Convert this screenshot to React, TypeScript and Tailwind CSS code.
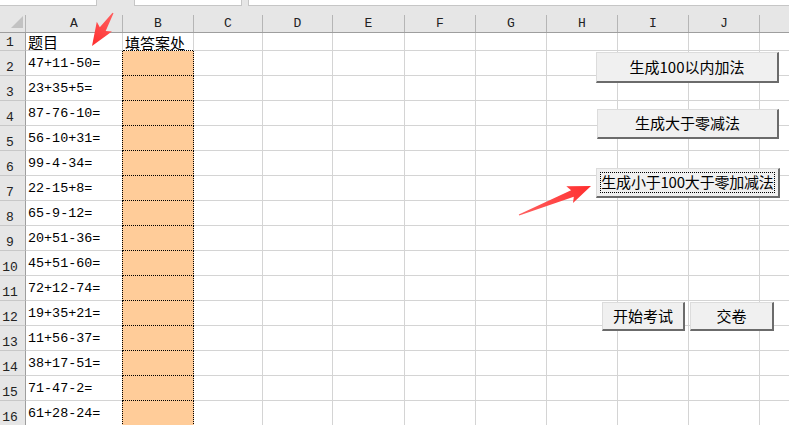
import React from 'react';

const cols = [
  { k: 'A', w: 'w-[97px]' },
  { k: 'B', w: 'w-[71px]' },
  { k: 'C', w: 'w-[69px]' },
  { k: 'D', w: 'w-[70px]' },
  { k: 'E', w: 'w-[72px]' },
  { k: 'F', w: 'w-[71px]' },
  { k: 'G', w: 'w-[71px]' },
  { k: 'H', w: 'w-[71px]' },
  { k: 'I', w: 'w-[71px]' },
  { k: 'J', w: 'w-[71px]' },
];

const problems = [
  '47+11-50=', '23+35+5=', '87-76-10=', '56-10+31=', '99-4-34=',
  '22-15+8=', '65-9-12=', '20+51-36=', '45+51-60=', '72+12-74=',
  '19+35+21=', '11+56-37=', '38+17-51=', '71-47-2=', '61+28-24=',
];

const mono = { fontFamily: '"Liberation Mono", "Noto Sans CJK SC", monospace' };
const cjk = { fontFamily: '"Noto Sans CJK SC", "Liberation Sans", sans-serif' };

// arrow polygon from tail to tip, thin at tail and wide at head
function arrowPoints(tx: number, ty: number, hx: number, hy: number, headLen = 20, headW = 9) {
  const dx = hx - tx;
  const dy = hy - ty;
  const len = Math.hypot(dx, dy);
  const ux = dx / len;
  const uy = dy / len;
  const nx = -uy;
  const ny = ux;
  const bx = hx - ux * headLen;
  const by = hy - uy * headLen;
  const wx = hx - ux * (headLen + 3);
  const wy = hy - uy * (headLen + 3);
  const pts = [
    [tx + nx * 0.6, ty + ny * 0.6],
    [bx + nx * 3.5, by + ny * 3.5],
    [wx + nx * headW, wy + ny * headW],
    [hx, hy],
    [wx - nx * headW, wy - ny * headW],
    [bx - nx * 3.5, by - ny * 3.5],
    [tx - nx * 0.6, ty - ny * 0.6],
  ];
  return pts.map(p => `${p[0].toFixed(1)},${p[1].toFixed(1)}`).join(' ');
}

const btn =
  'absolute flex items-center justify-center bg-[#f0f0f0] border-t border-l border-[#dcdcdc] border-r-2 border-b-2 border-r-[#6b6b6b] border-b-[#6b6b6b] text-[15px] text-black';

export default function App() {
  const rows: { n: number; text: string; cjkText?: string; bText?: string }[] = [
    { n: 1, text: '', cjkText: '题目', bText: '填答案处' },
    ...problems.map((p, i) => ({ n: i + 2, text: p })),
  ];

  return (
    <div className="relative w-[789px] h-[425px] overflow-hidden bg-white select-none">
      {/* formula bar strip */}
      <div className="flex h-[6px] bg-[#e6e6e6]">
        <div className="w-[97px] bg-white border-r border-b border-[#c6c6c6]" />
        <div className="w-[37px]" />
        <div className="w-[108px] bg-white border-x border-b border-[#c6c6c6]" />
        <div className="w-[6px]" />
        <div className="flex-1 bg-white border-l border-b border-[#c6c6c6]" />
      </div>

      {/* column headers */}
      <div className="bg-[#e6e6e6] h-[27px] flex flex-col justify-end border-b border-[#9e9e9e]">
        <div className="flex h-[17px]" style={mono}>
          <div className="w-[26px] relative border-r border-[#b5b5b5]">
            <svg className="absolute left-[11px] top-[1px]" width="12" height="12" viewBox="0 0 12 12">
              <polygon points="12,0 12,12 0,12" fill="#c2c2c2" />
            </svg>
          </div>
          {cols.map(c => (
            <div
              key={c.k}
              className={`${c.w} shrink-0 border-r border-[#b5b5b5] flex items-center justify-center text-[13px] text-[#222] leading-none`}
            >
              {c.k}
            </div>
          ))}
          <div className="flex-1" />
        </div>
      </div>

      {/* grid rows */}
      {rows.map(r => {
        const first = r.n === 1;
        return (
          <div key={r.n} className={`flex ${first ? 'h-[18px]' : 'h-[25px]'}`}>
            <div
              className="w-[26px] shrink-0 bg-[#e6e6e6] border-r border-b border-r-[#9e9e9e] border-b-[#c8c8c8] flex items-end justify-center pr-[5px] pb-[1px] text-[13px] leading-none text-[#222]"
              style={mono}
            >
              {r.n}
            </div>
            {first ? (
              <>
                <div className="w-[97px] shrink-0 border-r border-b border-[#d4d4d4] flex items-end pl-[2px] pb-[1px] leading-none">
                  <span className="text-[15px] text-black" style={cjk}>{r.cjkText}</span>
                </div>
                <div className="relative w-[71px] shrink-0 border-r border-[#d4d4d4] flex items-end pl-[2px] pb-[1px] leading-none">
                  <span className="text-[15px] text-black" style={cjk}>{r.bText}</span>
                  <div className="absolute left-0 right-0 bottom-0 border-b border-dotted border-black" />
                </div>
              </>
            ) : (
              <>
                <div
                  className="w-[96px] shrink-0 border-b border-[#d4d4d4] flex items-end pl-[2px] pb-[5px] text-[13.4px] leading-none text-black"
                  style={mono}
                >
                  {r.text}
                </div>
                <div className="w-[72px] shrink-0 bg-[#ffcc99] border-l border-r border-b border-dotted border-black" />
              </>
            )}
            {cols.slice(2).map(c => (
              <div key={c.k} className={`${c.w} shrink-0 border-r border-b border-[#d4d4d4]`} />
            ))}
            <div className="flex-1 border-b border-[#d4d4d4]" />
          </div>
        );
      })}

      {/* buttons */}
      <div className={`${btn} left-[596px] top-[52px] w-[183px] h-[31px]`} style={cjk}>
        生成100以内加法
      </div>
      <div className={`${btn} left-[597px] top-[109px] w-[182px] h-[30px]`} style={cjk}>
        生成大于零减法
      </div>
      <div className={`${btn} left-[596px] top-[168px] w-[184px] h-[30px] p-[3px]`} style={cjk}>
        <div className="w-full h-full border border-dotted border-black flex items-center justify-center whitespace-nowrap tracking-[-0.2px]">
          生成小于100大于零加减法
        </div>
      </div>
      <div className={`${btn} left-[602px] top-[302px] w-[83px] h-[29px]`} style={cjk}>
        开始考试
      </div>
      <div className={`${btn} left-[690px] top-[302px] w-[84px] h-[29px]`} style={cjk}>
        交卷
      </div>

      {/* red arrows */}
      <svg className="absolute inset-0 pointer-events-none" width="789" height="425">
        <defs>
          <linearGradient id="ag1" x1="113" y1="13" x2="92" y2="46" gradientUnits="userSpaceOnUse">
            <stop offset="0" stopColor="#ff6060" />
            <stop offset="1" stopColor="#ff2e2e" />
          </linearGradient>
          <linearGradient id="ag2" x1="519" y1="215" x2="591" y2="186" gradientUnits="userSpaceOnUse">
            <stop offset="0" stopColor="#ff6060" />
            <stop offset="1" stopColor="#ff2e2e" />
          </linearGradient>
        </defs>
        <polygon points={arrowPoints(113, 13, 92, 46, 20, 9)} fill="url(#ag1)" />
        <polygon points={arrowPoints(519, 215, 591, 186, 20, 9)} fill="url(#ag2)" />
      </svg>
    </div>
  );
}
